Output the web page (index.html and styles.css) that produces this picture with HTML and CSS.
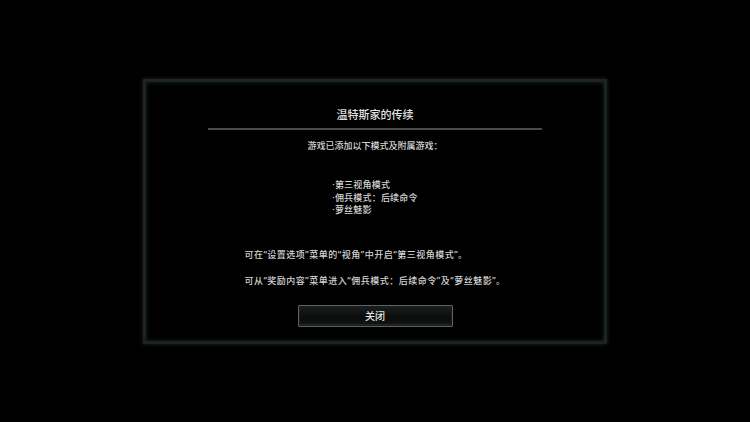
FILE: index.html
```html
<!DOCTYPE html>
<html lang="zh-CN">

<head>
    <meta charset="UTF-8">
    <meta name="viewport" content="width=device-width, initial-scale=1.0">
    <title>温特斯家的传续</title>
    <link rel="stylesheet" href="styles.css">
</head>

<body>
    <div class="screen">
        <div class="dialog">
            <div class="dialog-title">温特斯家的传续</div>
            <div class="divider"></div>
            <p class="intro">游戏已添加以下模式及附属游戏：</p>
            <ul class="content-list">
                <li>·第三视角模式</li>
                <li>·佣兵模式：后续命令</li>
                <li>·萝丝魅影</li>
            </ul>
            <div class="notes">
                <p>可在“设置选项”菜单的“视角”中开启“第三视角模式”。</p>
                <p>可从“奖励内容”菜单进入“佣兵模式：后续命令”及“萝丝魅影”。</p>
            </div>
            <button class="close-btn">关闭</button>
        </div>
    </div>
</body>

</html>
```

FILE: styles.css
```css
body {
    /* latin font first so quotes and dots stay narrow */
    font-family: "Noto Sans", "Noto Sans CJK SC", sans-serif;
    background-color: #000000;
    color: #d4d4d4;
    margin: 0;
    padding: 0;
}

.screen {
    display: flex;
    justify-content: center;
    padding-top: 79px;
    height: 422px;
    box-sizing: border-box;
}

.dialog {
    width: 464px;
    height: 265px;
    box-sizing: border-box;
    border: 3px solid #1c2422;
    box-shadow: 0 0 4px rgba(40, 56, 52, 0.7), inset 0 0 4px rgba(40, 56, 52, 0.7);
    padding: 25px 0 14px;
    display: flex;
    flex-direction: column;
    align-items: center;
}

.dialog-title {
    font-size: 11px;
    line-height: 16px;
    font-weight: 500;
    color: #e2e2e2;
}

.divider {
    width: 334px;
    height: 2px;
    margin-top: 5px;
    background-color: #4a4c4c;
}

.intro {
    font-size: 9px;
    line-height: 14px;
    font-weight: 500;
    margin: 9px 0 0;
}

.content-list {
    list-style: none;
    margin: 26px 0 0;
    padding: 0;
    font-size: 9px;
    line-height: 12.5px;
    font-weight: 500;
    letter-spacing: 0.2px;
    text-align: left;
}

.notes {
    margin-top: 31px;
    text-align: left;
    font-size: 9px;
    line-height: 14px;
    font-weight: 500;
    letter-spacing: 0.5px;
}

.notes p {
    margin: 0;
}

.notes p + p {
    margin-top: 12px;
}

.close-btn {
    margin-top: 17px;
    width: 155px;
    height: 22px;
    border: 1px solid #5c6161;
    border-radius: 1px;
    background: linear-gradient(#1c1e1e, #0a0b0b 60%, #141817);
    box-shadow: inset 0 0 0 1px #1a1d1d, inset 0 -1px 0 1px #202826;
    color: #e6e6e6;
    font-family: "Noto Sans", "Noto Sans CJK SC", sans-serif;
    font-size: 10px;
    font-weight: 500;
    padding: 0;
}
```
